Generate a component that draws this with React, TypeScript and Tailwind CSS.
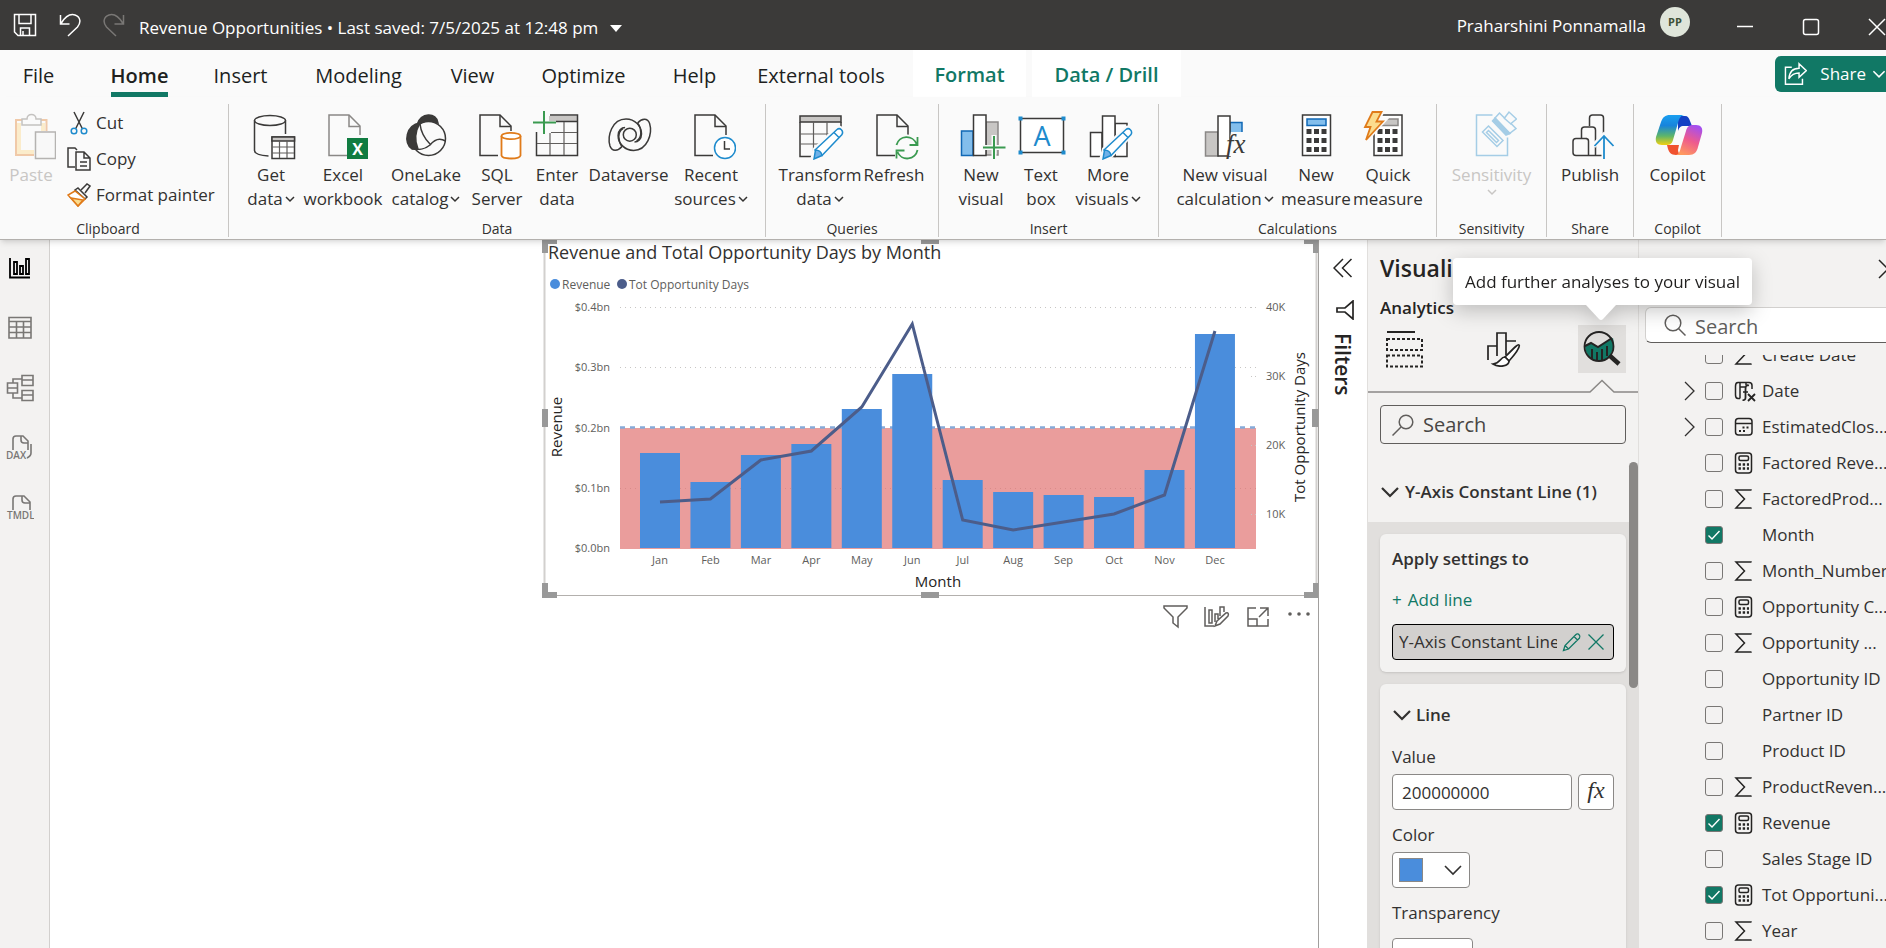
import type { ReactNode } from "react";

const MONTHS = [
  { name: "Jan", bar: 213, line: 262 },
  { name: "Feb", bar: 242, line: 259 },
  { name: "Mar", bar: 215, line: 220 },
  { name: "Apr", bar: 204, line: 211 },
  { name: "May", bar: 169, line: 167 },
  { name: "Jun", bar: 134, line: 84 },
  { name: "Jul", bar: 240, line: 280 },
  { name: "Aug", bar: 252, line: 290 },
  { name: "Sep", bar: 255, line: 282 },
  { name: "Oct", bar: 257, line: 274 },
  { name: "Nov", bar: 230, line: 255 },
  { name: "Dec", bar: 94, line: 91 },
];

type FieldIcon = "sum" | "calc" | "calendar" | "fx" | null;

const FIELDS: { name: string; icon: FieldIcon; checked?: boolean; expandable?: boolean }[] = [
  { name: "Create Date", icon: "sum" },
  { name: "Date", icon: "fx", expandable: true },
  { name: "EstimatedClos...", icon: "calendar", expandable: true },
  { name: "Factored Reve...", icon: "calc" },
  { name: "FactoredProd...", icon: "sum" },
  { name: "Month", icon: null, checked: true },
  { name: "Month_Number", icon: "sum" },
  { name: "Opportunity C...", icon: "calc" },
  { name: "Opportunity ...", icon: "sum" },
  { name: "Opportunity ID", icon: null },
  { name: "Partner ID", icon: null },
  { name: "Product ID", icon: null },
  { name: "ProductReven...", icon: "sum" },
  { name: "Revenue", icon: "calc", checked: true },
  { name: "Sales Stage ID", icon: null },
  { name: "Tot Opportuni...", icon: "calc", checked: true },
  { name: "Year", icon: "sum" },
];

const DARK = "#3b3a39";
const BLUE = "#1e8bcd";
const GREEN = "#3a9a50";
const ORANGE = "#e07b1a";

/* ---------- icons ---------- */

function Big({ children }: { children: ReactNode }) {
  return (
    <svg viewBox="0 0 50 50" className="size-[50px] shrink-0" fill="none" stroke={DARK} strokeWidth="1.5" aria-hidden="true">
      {children}
    </svg>
  );
}

function Doc({ x = 9, stroke = DARK }: { x?: number; stroke?: string }) {
  return (
    <g transform={`translate(${x} 0)`} stroke={stroke}>
      <path d="M18 45.5H0V5h20l11 11v9" fill="none" />
      <path d="M20 5v11.5h11" />
    </g>
  );
}

function Pencil({ x = 0 }: { x?: number }) {
  return (
    <g transform={`translate(${x} 0)`}>
      <path d="M17 50l3-11 22-21c3-2 8 3 6 6L27 46z" fill="#fafafa" stroke="#fafafa" strokeWidth="4" />
      <path d="M20 40l22-20.5c3-2.5 7 1.5 5 5L27 45.5z" fill="#fff" stroke={BLUE} />
      <path d="M19 49l1.5-9c3 0 6 2 6.5 5.5z" fill="#6fb1e8" stroke={BLUE} />
      <path d="M39 22.5l5 5" stroke={BLUE} />
    </g>
  );
}

function Chevron({ className, weight = 1.5 }: { className?: string; weight?: number }) {
  return (
    <svg viewBox="0 0 10 10" className={className ?? "size-[10px]"} fill="none" stroke="currentColor" strokeWidth={weight} aria-hidden="true">
      <path d="M1 3l4 4 4-4" />
    </svg>
  );
}

const PasteIcon = () => (
  <Big>
    <path d="M16 10H10v35h18M35 10h5.5v11" stroke="#f0c9a8" strokeWidth="2" />
    <path d="M13 13v29h15M37 13v8" stroke="#fbeccb" strokeWidth="4" />
    <path d="M16 15V9h5c0-6 9-6 9 0h5v6z" fill="#fafafa" stroke="#c4c2c0" />
    <path d="M29.5 22h20v26.5h-20z" fill="#f8f8f8" stroke="#b5b3b1" />
  </Big>
);

const GetDataIcon = () => (
  <Big>
    <ellipse cx="24" cy="10.5" rx="15.5" ry="5" />
    <path d="M8.5 10.5v30c0 3 6 5 14 5.5M39.5 10.5V24" />
    <path d="M26 27h22.5v21.5H26z" fill="#fff" />
    <path d="M26 27h22.5v4H26z" fill="#c8c6c4" />
    <path d="M26 37h22M26 43h22M33.5 31v17M41 31v17" stroke="#605e5c" strokeWidth="1.2" />
  </Big>
);

const ExcelIcon = () => (
  <Big>
    <Doc x={11} stroke="#8a8886" />
    <path d="M29 28h21v21H29z" fill="#107c41" stroke="none" />
    <text x="39.5" y="44.5" fill="#fff" stroke="none" fontSize="16" fontWeight="700" textAnchor="middle">X</text>
  </Big>
);

const OneLakeIcon = () => (
  <Big>
    <circle cx="27.5" cy="28.5" r="17" />
    <path d="M16 15c3-13 20-13 21-2-7-3-14-3-21 2z" fill={DARK} />
    <path d="M19 13c-14 2-17 20-8 26h6c-4-9-2-19 2-26z" fill={DARK} />
    <path d="M19 14c1 9 5 15 10 20M11 38.500c7 2 14 0 18-3.500 4-5 9-8 15.500-4" />
  </Big>
);

const SqlIcon = () => (
  <Big>
    <Doc x={8} />
    <path d="M27 21h23v28H27z" fill="#fafafa" stroke="none" />
    <path d="M29.5 26v19.5c1 4 18 4 19 0V26" fill="#fff" stroke={ORANGE} strokeWidth="1.8" />
    <ellipse cx="39" cy="26" rx="9.5" ry="3.2" fill="#fff" stroke={ORANGE} strokeWidth="1.8" />
  </Big>
);

const EnterDataIcon = () => (
  <Big>
    <path d="M17 6h29v5H17z" fill="#c8c6c4" stroke="none" />
    <path d="M4.5 22v23.5h41V5H18M24 11.5h21" />
    <path d="M19 22.5h26M5 33.5h40M18 23v22M32 12v33" stroke="#605e5c" strokeWidth="1.2" />
    <path d="M12 1v23M1 12.5h23" stroke={GREEN} strokeWidth="2" />
  </Big>
);

const SPIRAL_ARM = "M18 36.5C14 41 8 42 6 36 3 26 8 9 22 9c9 0 15.5 7 15.5 15 0 5-3.500 8-7 8M18 36.500C14 31 13 22 19 18.500";

const DataverseIcon = () => (
  <Big>
    <circle cx="25.8" cy="24.7" r="6.5" />
    <path d={SPIRAL_ARM} />
    <path d={SPIRAL_ARM} transform="rotate(180 25.8 24.7)" />
  </Big>
);

const RecentIcon = () => (
  <Big>
    <Doc />
    <circle cx="39" cy="38" r="12.5" fill="#fafafa" stroke="none" />
    <circle cx="39" cy="38" r="10.5" fill="#fff" stroke={BLUE} />
    <path d="M38.5 31v8H44" />
  </Big>
);

const TransformIcon = () => (
  <Big>
    <path d="M5 6h41v6H5z" fill="#c8c6c4" />
    <path d="M5 12v34.5h12M46 12v8" />
    <path d="M5 24h34M5 34h20M18.5 12v30M32 12v15" stroke="#605e5c" strokeWidth="1.2" />
    <Pencil />
  </Big>
);

const RefreshIcon = () => (
  <Big>
    <Doc x={8} />
    <circle cx="38" cy="37.5" r="13" fill="#fafafa" stroke="none" />
    <path d="M27.5 35a10.5 10.5 0 0 1 20-1M48.5 40a10.5 10.5 0 0 1-20 2M48.5 27v8h-8M27.5 48.5v-8h8" stroke={GREEN} strokeWidth="1.8" />
  </Big>
);

const NewVisualIcon = () => (
  <Big>
    <path d="M5.5 21H17v24.5H5.5z" fill="#83beec" stroke="#1168b5" />
    <path d="M30 12h12v33H30z" fill="#c8c6c4" stroke="#8a8886" />
    <path d="M17.5 5H30v40.5H17.5z" fill="#fff" />
    <path d="M38 25v25M26 37.5h24" stroke="#fafafa" strokeWidth="5" />
    <path d="M38 26v23M27 37.5h22.5" stroke={GREEN} strokeWidth="2" />
  </Big>
);

const TextBoxIcon = () => (
  <Big>
    <path d="M4.5 8.5h43v34h-43z" fill="#fff" />
    <path d="M2.5 6.5h4v4h-4zM45.5 6.5h4v4h-4zM2.5 40.5h4v4h-4zM45.5 40.5h4v4h-4z" fill={BLUE} stroke="none" />
    <text x="26" y="35.5" fill={BLUE} stroke="none" fontSize="27" textAnchor="middle">A</text>
  </Big>
);

const MoreVisualsIcon = () => (
  <Big>
    <path d="M19 22.5H7.5v24H19z" fill="#fff" />
    <path d="M32 13.5h12v33H32z" fill="#fff" />
    <path d="M19.5 6H32v40.5H19.5z" fill="#fff" />
    <Pencil x={1} />
  </Big>
);

const NewCalcIcon = () => (
  <Big>
    <path d="M5.5 22H18v24H5.5z" fill="#c8c6c4" stroke="#8a8886" />
    <path d="M30 12.5h12v14H30z" fill="#83beec" stroke="#1168b5" />
    <path d="M18 6h12v40H18z" fill="#fff" />
    <path d="M31 22h16v24H27z" fill="#fafafa" stroke="none" />
    <text x="26" y="43" fill={DARK} stroke="none" fontSize="27" fontStyle="italic" fontFamily="Liberation Serif, serif">fx</text>
  </Big>
);

function Keys({ x }: { x: number }) {
  return (
    <g transform={`translate(${x} 0)`} stroke="none" fill={DARK}>
      {[19, 28, 37].map((y) =>
        [4.5, 12, 19.5].map((kx) => <rect key={`${kx}-${y}`} x={kx} y={y} width="5" height="5" />),
      )}
    </g>
  );
}

const MeasureIcon = () => (
  <Big>
    <path d="M11.5 5h28v40.5h-28z" fill="#fff" />
    <path d="M16 9h19v6.5H16z" fill="#83beec" stroke="#1168b5" />
    <Keys x={11} />
  </Big>
);

const QuickIcon = () => (
  <Big>
    <path d="M11 5h28v40.5H11z" fill="#fff" />
    <path d="M19 9h16v6.5H16z" fill="#c8c6c4" stroke="#8a8886" />
    <Keys x={10} />
    <path d="M9 1h10l-4 9h6L2 31l4-14H1z" fill="#fbdc8e" stroke="#fafafa" strokeWidth="5" />
    <path d="M9.5 2h9l-5 9.5H20L3 30l4.5-13H2z" fill="#fbdc8e" stroke={ORANGE} strokeWidth="1.8" />
  </Big>
);

const SensitivityIcon = () => (
  <Big>
    <g stroke="#a5cde6">
      <path d="M25.5 5h-16v40.5h31v-18" />
      <path d="M21.500 16L36 30.500 30 36.500 15.500 22z" fill="#fafafa" />
      <path d="M21.500 20.500L31.500 30.500 29.500 32.500 19.500 22.500z" />
      <path d="M28 8l4.500-5 5 5 4.500-6 7.500 7-5.500 4.500 5 5-6.500 5z" fill="#fafafa" />
      <path d="M28 8l15 15.500-4 1.500L25.500 11z" fill="#a5cde6" />
      <path d="M37 8l7.500 6.500" />
    </g>
  </Big>
);

const PublishIcon = () => (
  <Big>
    <path d="M24.5 16V8c0-2 1-3 3-3h8c2 0 3 1 3 3v19M16.5 28v-8c0-2 1-3 3-3h8c2 0 3 1 3 3v25.5" />
    <path d="M22 28.500H11c-2 0-3 1-3 3v11c0 2 1 3 3 3h26M23.500 45V31c0-2-1-2.500-3-2.500" />
    <path d="M39 49V26M28.500 36L39 25l10.500 11" stroke="#fafafa" strokeWidth="5" />
    <path d="M39 49V26M29.500 36L39 26l9.500 10" stroke={BLUE} strokeWidth="1.8" />
  </Big>
);

const CopilotIcon = () => (
  <Big>
    <defs>
      <linearGradient id="cpA" x1="0" y1="0" x2="0" y2="1">
        <stop offset="0" stopColor="#1a9ff0" />
        <stop offset="0.35" stopColor="#1784dc" />
        <stop offset="0.7" stopColor="#5db56a" />
        <stop offset="1" stopColor="#f2d111" />
      </linearGradient>
      <linearGradient id="cpB" x1="0.7" y1="0" x2="0.3" y2="1">
        <stop offset="0" stopColor="#a44ff0" />
        <stop offset="0.5" stopColor="#ee5a8e" />
        <stop offset="1" stopColor="#ff9a5e" />
      </linearGradient>
    </defs>
    <g stroke="none">
      <path d="M25 6h7c3 0 4 2 5 5l2 5h-8c-4 0-5 2-6 5z" fill="#1340c4" />
      <path d="M14 35h12l-1 5c0 3 2 5 4 5h-6c-5 0-7-3-8-6z" fill="#f0522f" />
      <path d="M17 5h14c-4 1-5 4-6 8l-5 17c-1 4-3 5-7 5H9c-5 0-7-3-6-8l5-15c2-5 4-7 9-7z" fill="url(#cpA)" />
      <path d="M36 45H23c3-1 4-4 5-8l5-16c1-4 3-6 7-6h3c5 0 7 3 6 8l-4 14c-1 5-4 8-9 8z" fill="url(#cpB)" />
    </g>
  </Big>
);

/* ---------- title bar and tabs ---------- */

function TitleBar() {
  return (
    <header className="flex h-[50px] shrink-0 items-center overflow-hidden bg-[#3b3a39] text-[17px] text-white">
      <button aria-label="Save" className="ml-[13px]">
        <svg viewBox="0 0 24 24" className="size-6" fill="none" stroke="currentColor" strokeWidth="1.5">
          <path d="M1.5 1.5h21v21H5l-3.5-3.5zM6 2v8.5h12V2M7.5 22v-7h9v7M10 18v4" />
        </svg>
      </button>
      <button aria-label="Undo" className="ml-[22px]">
        <svg viewBox="0 0 22 24" className="h-6 w-[22px]" fill="none" stroke="currentColor" strokeWidth="1.5">
          <path d="M1.5 2v9h9M2 10.5C6 4 11 .5 16 2c6 2 6 8 2.5 12L9 23" />
        </svg>
      </button>
      <button aria-label="Redo" className="ml-[22px] text-[#797775]">
        <svg viewBox="0 0 22 24" className="h-6 w-[22px]" fill="none" stroke="currentColor" strokeWidth="1.5">
          <path d="M20.5 2v9h-9M20 10.5C16 4 11 .5 6 2 0 4 0 10 3.5 14L13 23" />
        </svg>
      </button>
      <button className="ml-[14px] flex items-center gap-3 pt-[6px] whitespace-nowrap">
        Revenue Opportunities • Last saved: 7/5/2025 at 12:48 pm
        <svg viewBox="0 0 12 7" className="h-[7px] w-3" fill="currentColor" aria-hidden="true"><path d="M0 0h12L6 7z" /></svg>
      </button>
      <div className="mr-px ml-auto flex shrink-0 items-center">
        <span className="pt-px">Praharshini Ponnamalla</span>
        <span className="mb-[6px] ml-[14px] flex size-[30px] items-center justify-center rounded-full bg-[#dfe5da] text-[11px] font-bold text-[#3e5238]">PP</span>
        <button aria-label="Minimize" className="ml-[46px]">
          <svg viewBox="0 0 18 18" className="size-[18px]" stroke="currentColor" strokeWidth="1.5"><path d="M1 10.5h16" /></svg>
        </button>
        <button aria-label="Maximize" className="ml-12 pt-1">
          <svg viewBox="0 0 18 18" className="size-[18px]" fill="none" stroke="currentColor" strokeWidth="1.5"><rect x="1.5" y="1.5" width="15" height="15" rx="2" /></svg>
        </button>
        <button aria-label="Close" className="-mr-px ml-12 pt-1">
          <svg viewBox="0 0 18 18" className="size-[18px]" stroke="currentColor" strokeWidth="1.5"><path d="M1 1l16 16M17 1L1 17" /></svg>
        </button>
      </div>
    </header>
  );
}

const TABS = [
  { name: "File", width: "w-[77px]" },
  { name: "Home", width: "w-[125px]", active: true },
  { name: "Insert", width: "w-[77px]" },
  { name: "Modeling", width: "w-[159px]" },
  { name: "View", width: "w-[69px]" },
  { name: "Optimize", width: "w-[153px]" },
  { name: "Help", width: "w-[69px]" },
  { name: "External tools", width: "w-[184px]" },
];

function TabBar() {
  return (
    <nav className="flex h-[47px] shrink-0 items-stretch overflow-hidden bg-[#fafafa] text-[20px] text-[#201f1e]">
      {TABS.map((tab) => (
        <button key={tab.name} className={`${tab.width} flex shrink-0 justify-center whitespace-nowrap`}>
          <span className={tab.active ? "border-b-[5px] border-[#117865] pt-[9px] leading-[33px] font-semibold" : "pt-[9px] leading-[33px]"}>
            {tab.name}
          </span>
        </button>
      ))}
      <button className="w-[113px] shrink-0 bg-white pt-[3px] font-semibold text-[#117865]">Format</button>
      <button className="ml-[6px] w-[149px] shrink-0 bg-white pt-[3px] font-semibold whitespace-nowrap text-[#117865]">Data / Drill</button>
      <button className="mt-[6px] mb-[5px] ml-auto flex w-[111px] shrink-0 items-center rounded-l-md bg-[#117865] pl-[9px] text-[17px] text-white">
        <svg viewBox="0 0 24 24" className="size-6" fill="none" stroke="currentColor" strokeWidth="1.5" aria-hidden="true">
          <path d="M8 5H1.5v17.5H19V17M15.5 1.5l7.5 7-7.5 7v-4.5c-5 0-8 2-10.5 6 .5-7 4-11 10.5-11z" />
        </svg>
        <span className="ml-[13px]">Share</span>
        <Chevron className="ml-[6px] size-[14px] shrink-0" weight={1.1} />
      </button>
    </nav>
  );
}

/* ---------- ribbon ---------- */

function RibbonButton({ icon, lines, width, menu, disabled }: { icon: ReactNode; lines: string[]; width: string; menu?: boolean; disabled?: boolean }) {
  return (
    <button disabled={disabled} className={`${width} flex shrink-0 flex-col items-center text-[17px] leading-6 whitespace-nowrap ${disabled ? "text-[#c8c6c4]" : "text-[#323130]"}`}>
      {icon}
      {lines.map((line, i) => (
        <span key={i} className={`flex items-center gap-[2px] ${i === 0 ? "mt-[3px]" : ""}`}>
          {line}
          {menu && i === lines.length - 1 && <Chevron />}
        </span>
      ))}
    </button>
  );
}

function RibbonGroup({ label, width, pad = "justify-center", children }: { label: string; width: string; pad?: string; children: ReactNode }) {
  return (
    <section aria-label={label} className={`${width} mt-[7px] mb-[2px] flex shrink-0 flex-col border-r border-[#c8c6c4] pt-[6px]`}>
      <div className={`flex ${pad}`}>{children}</div>
      <div className="mt-auto text-center text-[14px] leading-[17px] text-[#323130]">{label}</div>
    </section>
  );
}

function ClipItem({ label, children }: { label: string; children: ReactNode }) {
  return (
    <button className="flex h-9 items-center gap-[5px] text-[17px] whitespace-nowrap text-[#323130]">
      <svg viewBox="0 0 24 24" className="size-6" fill="none" stroke={DARK} strokeWidth="1.5" aria-hidden="true">{children}</svg>
      {label}
    </button>
  );
}

function Ribbon() {
  return (
    <div className="z-30 flex h-[143px] shrink-0 overflow-hidden border-b border-[#b3b0ad] bg-[#fafafa] shadow-md">
      <RibbonGroup label="Clipboard" width="w-[229px] pr-3" pad="pl-[6px]">
        <RibbonButton icon={<PasteIcon />} lines={["Paste"]} width="w-[50px]" disabled />
        <div className="-mt-[5px] ml-[11px]">
          <ClipItem label="Cut">
            <path d="M7 1l8.5 17M17 1L8.5 18" />
            <g stroke={BLUE}><circle cx="7" cy="20" r="2.8" /><circle cx="17" cy="20" r="2.8" /></g>
          </ClipItem>
          <ClipItem label="Copy">
            <path d="M8 20H1V1h7l2 2M9 5h8l6 6v12H9zM17 5v6h6M13 15h7M13 19h7" />
          </ClipItem>
          <ClipItem label="Format painter">
            <path d="M14 7l6-6 3 2-5 7" />
            <path d="M11 5l9 9-2 2L8 7z" />
            <path d="M8 8L1 12l10 11 7-7z" fill="#fff" stroke={ORANGE} />
            <path d="M4 15l12 2-5 6z" fill="#fbdc8e" stroke={ORANGE} />
          </ClipItem>
        </div>
      </RibbonGroup>
      <RibbonGroup label="Data" width="w-[537px]" pad="pl-[10px]">
        <RibbonButton icon={<GetDataIcon />} lines={["Get", "data"]} width="w-[64px]" menu />
        <RibbonButton icon={<ExcelIcon />} lines={["Excel", "workbook"]} width="w-[80px]" />
        <RibbonButton icon={<OneLakeIcon />} lines={["OneLake", "catalog"]} width="w-[86px]" menu />
        <RibbonButton icon={<SqlIcon />} lines={["SQL", "Server"]} width="w-[56px]" />
        <RibbonButton icon={<EnterDataIcon />} lines={["Enter", "data"]} width="w-[64px]" />
        <RibbonButton icon={<DataverseIcon />} lines={["Dataverse"]} width="w-[79px]" />
        <RibbonButton icon={<RecentIcon />} lines={["Recent", "sources"]} width="w-[86px]" menu />
      </RibbonGroup>
      <RibbonGroup label="Queries" width="w-[173px]">
        <RibbonButton icon={<TransformIcon />} lines={["Transform", "data"]} width="w-[84px]" menu />
        <RibbonButton icon={<RefreshIcon />} lines={["Refresh"]} width="w-[64px]" />
      </RibbonGroup>
      <RibbonGroup label="Insert" width="w-[220px]" pad="pl-3">
        <RibbonButton icon={<NewVisualIcon />} lines={["New", "visual"]} width="w-[60px]" />
        <RibbonButton icon={<TextBoxIcon />} lines={["Text", "box"]} width="w-[60px]" />
        <RibbonButton icon={<MoreVisualsIcon />} lines={["More", "visuals"]} width="w-[74px]" menu />
      </RibbonGroup>
      <RibbonGroup label="Calculations" width="w-[278px]" pad="pl-[10px]">
        <RibbonButton icon={<NewCalcIcon />} lines={["New visual", "calculation"]} width="w-[112px]" menu />
        <RibbonButton icon={<MeasureIcon />} lines={["New", "measure"]} width="w-[70px]" />
        <RibbonButton icon={<QuickIcon />} lines={["Quick", "measure"]} width="w-[74px]" />
      </RibbonGroup>
      <RibbonGroup label="Sensitivity" width="w-[110px]">
        <RibbonButton icon={<SensitivityIcon />} lines={["Sensitivity", ""]} width="w-[86px]" menu disabled />
      </RibbonGroup>
      <RibbonGroup label="Share" width="w-[87px]">
        <RibbonButton icon={<PublishIcon />} lines={["Publish"]} width="w-[64px]" />
      </RibbonGroup>
      <RibbonGroup label="Copilot" width="w-[88px]">
        <RibbonButton icon={<CopilotIcon />} lines={["Copilot"]} width="w-[64px]" />
      </RibbonGroup>
    </div>
  );
}

/* ---------- left rail ---------- */

function RailButton({ label, active, children }: { label: string; active?: boolean; children: ReactNode }) {
  return (
    <button aria-label={label} className={`flex h-[60px] w-10 items-center justify-center ${active ? "text-black" : "text-[#797775]"}`}>
      <svg viewBox="0 0 28 28" className="size-7" fill="none" stroke="currentColor" strokeWidth="1.6">{children}</svg>
    </button>
  );
}

function Rail() {
  return (
    <nav aria-label="Views" className="-mt-[2px] w-[50px] shrink-0 border-r border-[#d2d0ce] bg-[#f3f2f1]">
      <RailButton label="Report view" active>
        <path d="M4 4v19.500h20M8 8h3v12H8zM14 12h3v8h-3zM20 5h3v15h-3z" strokeWidth="1.800" />
      </RailButton>
      <RailButton label="Table view">
        <path d="M3 3.500h22v20.500H3zM3 7.500h22M3 13h22M3 18.500h22M10.500 7.500V24M17.500 7.500V24" />
      </RailButton>
      <RailButton label="Model view">
        <path d="M1.500 9h10v10h-10zM1.500 14h10M16 1.500h11v10H16zM16 6h11M16 16.500h11v10H16zM16 21h11M7 9V5h9M7 19v5h9" />
      </RailButton>
      <RailButton label="DAX query view">
        <path d="M7 16V5c0-2 1-3 3-3h7l5 5v9M15 2v4c0 2 1 3 3 3h4M25 10v9c0 3-2 4-4 5" />
        <text x="0" y="25" fontSize="10" fontWeight="600" fill="currentColor" stroke="none">DAX</text>
      </RailButton>
      <RailButton label="TMDL view">
        <path d="M7 16V5c0-2 1-3 3-3h8l6 6v8M16 2v4c0 2 1 3 3 3h5" />
        <text x="1" y="25" fontSize="10" fontWeight="600" fill="currentColor" stroke="none">TMDL</text>
      </RailButton>
    </nav>
  );
}

/* ---------- chart ---------- */

const BASE = 308;
const monthX = (i: number) => 118 + i * 50.45;

function ChartVisual() {
  const points = MONTHS.map((m, i) => `${monthX(i)},${m.line}`).join(" ");
  return (
    <svg viewBox="0 0 776 358" className="block h-[358px] w-[776px]" role="img" aria-label="Revenue and Total Opportunity Days by Month">
      <text x="6" y="19" fontSize="18" fill="#323130">Revenue and Total Opportunity Days by Month</text>
      <circle cx="13" cy="44" r="5" fill="#4a8ddc" />
      <text x="20" y="49" fontSize="12" fill="#605e5c">Revenue</text>
      <circle cx="80" cy="44" r="5" fill="#4c5d8a" />
      <text x="87" y="49" fontSize="12" fill="#605e5c">Tot Opportunity Days</text>

      <rect x="78" y="188" width="636" height="121" fill="#ea9d9c" />
      {[67, 127, 248].map((y) => (
        <path key={y} d={`M78 ${y + 0.5}H714`} stroke={y > 188 ? "#d98b8a" : "#c8c6c4"} strokeDasharray="1 4" />
      ))}
      {[67, 136, 205, 274].map((y) => (
        <path key={y} d={`M709 ${y + 0.5}h5`} stroke="#c8c6c4" strokeDasharray="1 3" />
      ))}
      <path d="M78 187.500H714" stroke="#86abd9" strokeWidth="2.500" strokeDasharray="5 5" />

      {MONTHS.map((m, i) => (
        <g key={m.name}>
          <rect x={monthX(i) - 20} y={m.bar} width="40" height={BASE - m.bar} fill="#4a8ddc" />
          <text x={monthX(i)} y="324" fontSize="11" fill="#605e5c" textAnchor="middle">{m.name}</text>
        </g>
      ))}
      <polyline points={points} fill="none" stroke="#4c5d8a" strokeWidth="3" />

      {["$0.4bn", "$0.3bn", "$0.2bn", "$0.1bn", "$0.0bn"].map((label, i) => (
        <text key={label} x="68" y={71 + Math.round(i * 60.3)} fontSize="11" fill="#605e5c" textAnchor="end">{label}</text>
      ))}
      {["40K", "30K", "20K", "10K"].map((label, i) => (
        <text key={label} x="724" y={71 + i * 69} fontSize="11" fill="#605e5c">{label}</text>
      ))}
      <text x="396" y="347" fontSize="15" fill="#252423" textAnchor="middle">Month</text>
      <text transform="translate(20 187) rotate(-90)" fontSize="15" fill="#252423" textAnchor="middle">Revenue</text>
      <text transform="translate(763 187) rotate(-90)" fontSize="15" fill="#252423" textAnchor="middle">Tot Opportunity Days</text>

      <path d="M2.500 0v355M774.500 0v355" stroke="#d2d0ce" strokeWidth="2" />
      <path d="M0 355.500h776" stroke="#b3b0ad" />
      <g fill="#999">
        <path d="M0 0h15v4H6v9H0zM379 0h18v4h-18zM776 0h-14v4h9v9h5z" />
        <path d="M0 169h6v18H0zM770 169h6v18h-6z" />
        <path d="M0 358h15v-6H6v-9H0zM379 352h18v6h-18zM776 358h-14v-6h9v-9h5z" />
      </g>
    </svg>
  );
}

function Canvas() {
  return (
    <main className="flex min-w-0 flex-1 flex-col items-end overflow-hidden bg-white">
      <ChartVisual />
      <div className="flex items-center gap-[13px] pt-1 pr-[5px] text-[#605e5c]">
        <button aria-label="Filter">
          <svg viewBox="0 0 28 28" className="size-7" fill="none" stroke="currentColor" strokeWidth="1.5"><path d="M2 4h23v2l-9 9v10l-5-4v-6L2 6z" /></svg>
        </button>
        <button aria-label="Personalize">
          <svg viewBox="0 0 28 28" className="size-7" fill="none" stroke="currentColor" strokeWidth="1.5"><path d="M2 5v19h9M6 8h3v13H6zM12 20v-8h3v5M17 14V5h4v5M12 24l2-5 9-8c2-1 3 1 2 3l-8 8z" /></svg>
        </button>
        <button aria-label="Focus mode">
          <svg viewBox="0 0 28 28" className="size-7" fill="none" stroke="currentColor" strokeWidth="1.5"><path d="M12 6H4v18h20v-7M4 17h9v7M16 6h8v8M24 6l-9 9" /></svg>
        </button>
        <button aria-label="More options">
          <svg viewBox="0 0 28 28" className="size-7" fill="currentColor"><circle cx="5" cy="12" r="1.8" /><circle cx="14" cy="12" r="1.8" /><circle cx="23" cy="12" r="1.8" /></svg>
        </button>
      </div>
    </main>
  );
}

function FiltersPane() {
  return (
    <aside className="flex w-[49px] shrink-0 flex-col items-center border-l border-[#a19f9d] bg-white pt-[18px] text-[#252423]">
      <button aria-label="Expand filters">
        <svg viewBox="0 0 20 20" className="size-5" fill="none" stroke="currentColor" strokeWidth="1.5"><path d="M10 1L1 10l9 9M18.5 1l-9 9 9 9" /></svg>
      </button>
      <svg viewBox="0 0 20 20" className="mt-[22px] ml-1 size-5" fill="none" stroke="currentColor" strokeWidth="1.7" aria-hidden="true">
        <path d="M18 1v18l-8-7H2V8h8z" />
      </svg>
      <h2 className="mt-[13px] text-[21px] leading-6 font-semibold [writing-mode:vertical-rl]">Filters</h2>
    </aside>
  );
}

/* ---------- visualizations pane ---------- */

function Tooltip() {
  return (
    <div role="tooltip" className="absolute top-[18px] left-[85px] z-20 rounded bg-white px-3 py-[11px] text-[17px] leading-[25px] whitespace-nowrap text-[#201f1e] drop-shadow-[0_6px_10px_rgba(0,0,0,0.22)]">
      Add further analyses to your visual
      <svg viewBox="0 0 30 16" className="absolute top-full left-[133px] h-4 w-[30px]" fill="#fff" aria-hidden="true"><path d="M0 0h30L17 14q-2 2-4 0z" /></svg>
    </div>
  );
}

function VisualizationsPane() {
  return (
    <aside className="relative z-10 flex w-[272px] shrink-0 flex-col border-x border-[#e1dfdd] bg-[#f3f2f1] text-[17px] text-[#323130]">
      <Tooltip />
      <h2 className="pt-[14px] pl-3 text-[23px] leading-7 font-semibold text-[#252423]">Visualizations</h2>
      <h3 className="mt-[14px] pl-3 leading-6 font-semibold text-[#252423]">Analytics</h3>
      <div className="mt-[5px] flex h-12 items-center justify-between pr-3 pl-[18px]">
        <button aria-label="Build visual">
          <svg viewBox="0 0 38 38" className="size-[38px]" fill="none" stroke="#252423" strokeWidth="2">
            <path d="M1 2h28" />
            <path d="M1 9h35v11H1zM1 25.500h35v11H1z" strokeDasharray="3 2" />
          </svg>
        </button>
        <button aria-label="Format visual" className="ml-[5px]">
          <svg viewBox="0 0 36 36" className="size-9" fill="none" stroke="#252423" strokeWidth="1.7">
            <path d="M2 29V15h9M11 25V2h9v22M20 10h10" />
            <path d="M33 14c-1-1-3 1-14 12l4 4c9-10 11-15 10-16z" fill="#fff" />
            <path d="M19 26c-5 0-4 6-12 7 6 4 16 2 16-3z" fill="#fff" />
          </svg>
        </button>
        <button aria-label="Analytics" className="flex size-12 items-center justify-center bg-[#e1dfdd]">
          <svg viewBox="0 0 40 40" className="size-10" fill="none">
            <path d="M27 26l10 9" stroke="#252423" strokeWidth="4.500" />
            <path d="M3 17l6-3 7 4 15-9c3 12-4 23-14 23-8 0-14-7-14-15z" fill="#117865" />
            <path d="M10 20v10M15 23v8M20 20v11M25 17v10" stroke="#252423" strokeWidth="2" />
            <path d="M3 17l6-3 7 4 14-9" stroke="#252423" strokeWidth="2" />
            <circle cx="17" cy="17.500" r="14.500" stroke="#252423" strokeWidth="1.800" />
          </svg>
        </button>
      </div>
      <svg viewBox="0 0 270 14" className="mt-[6px] h-[14px] w-full" fill="none" stroke="#8a8886" strokeWidth="1.5" aria-hidden="true">
        <path d="M0 13h222L234 1.500 246 13h24" />
      </svg>
      <label className="mx-3 mt-3 flex h-[39px] shrink-0 items-center rounded-sm border border-[#605e5c] pl-[11px]">
        <svg viewBox="0 0 22 22" className="size-[22px] shrink-0" fill="none" stroke="#605e5c" strokeWidth="1.5" aria-hidden="true">
          <circle cx="14" cy="8" r="6.8" />
          <path d="M9 13l-8.500 8.500" />
        </svg>
        <input type="text" aria-label="Search analytics" placeholder="Search" className="ml-[9px] w-full min-w-0 bg-transparent text-[20px] outline-none placeholder:text-[#484644]" />
      </label>

      <div className="mt-[18px] flex min-h-0 flex-1 overflow-hidden">
        <div className="min-w-0 flex-1">
          <button className="flex h-[60px] w-full items-center gap-[5px] pl-3 font-semibold whitespace-nowrap">
            <Chevron className="size-5 shrink-0" weight={1.1} />
            Y-Axis Constant Line (1)
          </button>
          <div className="bg-[#e1dfdd] py-3 pr-[3px] pl-3">
            <section className="rounded-md bg-[#f3f2f1] px-3 pt-3 pb-3 shadow">
              <h4 className="leading-[26px] font-semibold">Apply settings to</h4>
              <button className="mt-[15px] flex gap-[6px] leading-[26px] text-[#117865]">
                <span>+</span>Add line
              </button>
              <div className="mt-[11px] flex h-9 items-center rounded-sm border border-black bg-[#d2d0ce] pr-2 pl-[6px]">
                <span className="w-[161px] overflow-hidden whitespace-nowrap">Y-Axis Constant Line 1</span>
                <button aria-label="Rename" className="ml-[5px]">
                  <svg viewBox="0 0 20 20" className="size-5" fill="none" stroke="#117865" strokeWidth="1.3"><path d="M1.500 18.500l1.500-5L14 2.500c2-2 5 1.500 3.500 3.500L6.500 17zM12 4.500l3.500 3.500M3 13.500L6.500 17" /></svg>
                </button>
                <button aria-label="Delete" className="ml-[5px]">
                  <svg viewBox="0 0 18 18" className="size-[18px]" stroke="#117865" strokeWidth="1.3"><path d="M1.500 1.500l15 15M16.500 1.500l-15 15" /></svg>
                </button>
              </div>
            </section>
            <section className="mt-3 rounded-md bg-[#f3f2f1] px-3 pt-[18px] pb-6 shadow">
              <button className="flex items-center gap-1 leading-[26px] font-semibold">
                <Chevron className="size-5" weight={1.1} />
                Line
              </button>
              <label htmlFor="line-value" className="mt-4 block leading-[26px]">Value</label>
              <div className="mt-1 flex gap-[6px]">
                <input id="line-value" type="text" defaultValue="200000000" className="h-9 w-full min-w-0 rounded-sm border border-[#8a8886] bg-white pl-[9px] text-[17px]" />
                <button aria-label="Conditional formatting" className="size-9 shrink-0 rounded-sm border border-[#8a8886] bg-white pb-1 font-['Liberation_Serif',serif] text-[24px] leading-none italic">fx</button>
              </div>
              <label htmlFor="line-color" className="mt-3 block leading-[26px]">Color</label>
              <div className="relative mt-1 flex h-9 w-[78px] items-center justify-between rounded-sm border border-[#8a8886] bg-white px-[6px]">
                <span className="size-6 border border-[#8a8886] bg-[#4a8ddc]" />
                <Chevron className="size-5" weight={0.8} />
                <select id="line-color" className="absolute inset-0 appearance-none text-transparent opacity-0">
                  <option>Blue</option>
                </select>
              </div>
              <label htmlFor="line-transparency" className="mt-3 block leading-[26px]">Transparency</label>
              <div className="mt-3 flex items-center gap-[18px]">
                <input id="line-transparency" type="number" defaultValue="50" className="h-9 w-[81px] rounded-sm border border-[#8a8886] bg-white pl-[9px]" />
                <input type="range" aria-label="Transparency slider" className="w-24 accent-[#8a8886]" />
              </div>
            </section>
          </div>
        </div>
        <div className="w-[9px] shrink-0 bg-[linear-gradient(#f3f2f1_60px,#e1dfdd_60px)]">
          <div className="h-[226px] rounded-full bg-[#8a8886]" />
        </div>
      </div>
    </aside>
  );
}

/* ---------- data pane ---------- */

function FieldGlyph({ icon }: { icon: FieldIcon }) {
  return (
    <svg viewBox="0 0 22 22" className="size-[22px] shrink-0" fill="none" stroke="#252423" strokeWidth="1.5" aria-hidden="true">
      {icon === "sum" && <path d="M17 2.500V2H2l8.500 9L2 20h15v-.500" />}
      {icon === "calc" && (
        <>
          <rect x="1.5" y="1" width="16" height="20" rx="3" />
          <rect x="5" y="4" width="9.5" height="4.5" rx="1.5" />
          <path d="M4.5 12.5h10.500M4.500 16.500h10.500" strokeWidth="2.400" strokeDasharray="2.400 1.800" />
        </>
      )}
      {icon === "calendar" && (
        <>
          <rect x="1.5" y="2.5" width="16.5" height="16.5" rx="3" />
          <path d="M1.5 7.500H18" />
          <path d="M8.500 11.500h7M5 15h7" strokeWidth="2" strokeDasharray="2 2" />
        </>
      )}
      {icon === "fx" && (
        <>
          <path d="M6 18.500H4C2 18.500 1.500 17 1.500 15V6c0-2 .500-3.500 2.500-3.500h11c2 0 3 1 3 3V9M6 2.500v16M6 7h5M12 2.500V5M9 12h5" />
          <path d="M15 5.500c-3-1-3.500 1-3.500 4v8c0 2-1 3-3 2.500M14 14l7 7M21 14l-7 7" strokeWidth="1.8" />
        </>
      )}
    </svg>
  );
}

function DataPane() {
  return (
    <aside className="flex w-[247px] shrink-0 flex-col overflow-hidden bg-[#f3f2f1] text-[17px] text-[#323130]">
      <div className="flex h-[67px] shrink-0 items-start justify-between pt-[15px] pl-3">
        <h2 className="text-[22px] leading-7 font-semibold">Data</h2>
        <button aria-label="Close pane" className="mt-1 -mr-3">
          <svg viewBox="0 0 20 20" className="size-5" stroke="#252423" strokeWidth="1.5"><path d="M1 1l18 18M19 1L1 19" /></svg>
        </button>
      </div>
      <label className="-mr-2 ml-[6px] flex h-9 shrink-0 items-center rounded-md border border-[#d2d0ce] border-b-[#605e5c] bg-white pl-[18px]">
        <svg viewBox="0 0 22 22" className="size-[22px] shrink-0" fill="none" stroke="#605e5c" strokeWidth="1.5" aria-hidden="true">
          <circle cx="9" cy="9" r="7.8" />
          <path d="M14.5 14.500l7 7" />
        </svg>
        <input type="text" aria-label="Search fields" placeholder="Search" className="ml-[9px] w-full min-w-0 bg-transparent pt-1 text-[20px] outline-none placeholder:text-[#605e5c]" />
      </label>
      <ul className="mt-3 flex min-h-0 flex-1 flex-col overflow-hidden">
        {FIELDS.map((field, i) => (
          <li key={field.name} className={`flex h-9 shrink-0 items-center pl-[44px] ${i === 0 ? "-mt-[18px]" : ""}`}>
            <span className="w-[22px] shrink-0">
              {field.expandable && (
                <svg viewBox="0 0 12 20" className="h-5 w-3" fill="none" stroke="#323130" strokeWidth="1.3" aria-hidden="true"><path d="M2 1l9 9-9 9" /></svg>
              )}
            </span>
            <label className="flex items-center whitespace-nowrap">
              <span className="grid size-[18px] shrink-0 place-items-center">
                <input type="checkbox" defaultChecked={field.checked} className="peer col-start-1 row-start-1 size-[18px] appearance-none rounded-[3px] border border-[#797775] checked:bg-[#117865]" />
                <svg viewBox="0 0 14 14" className="invisible col-start-1 row-start-1 size-[14px] peer-checked:visible" fill="none" stroke="#fff" strokeWidth="1.4" aria-hidden="true"><path d="M1.500 7.500l3.500 3.500L12.500 3" /></svg>
              </span>
              <span className="ml-[11px] w-[28px] shrink-0"><FieldGlyph icon={field.icon} /></span>
              {field.name}
            </label>
          </li>
        ))}
      </ul>
    </aside>
  );
}

export default function App() {
  return (
    <div className="flex h-screen flex-col overflow-hidden bg-white font-['Open_Sans','Noto_Sans',sans-serif]">
      <TitleBar />
      <TabBar />
      <Ribbon />
      <div className="flex min-h-0 flex-1">
        <Rail />
        <Canvas />
        <FiltersPane />
        <VisualizationsPane />
        <DataPane />
      </div>
    </div>
  );
}
